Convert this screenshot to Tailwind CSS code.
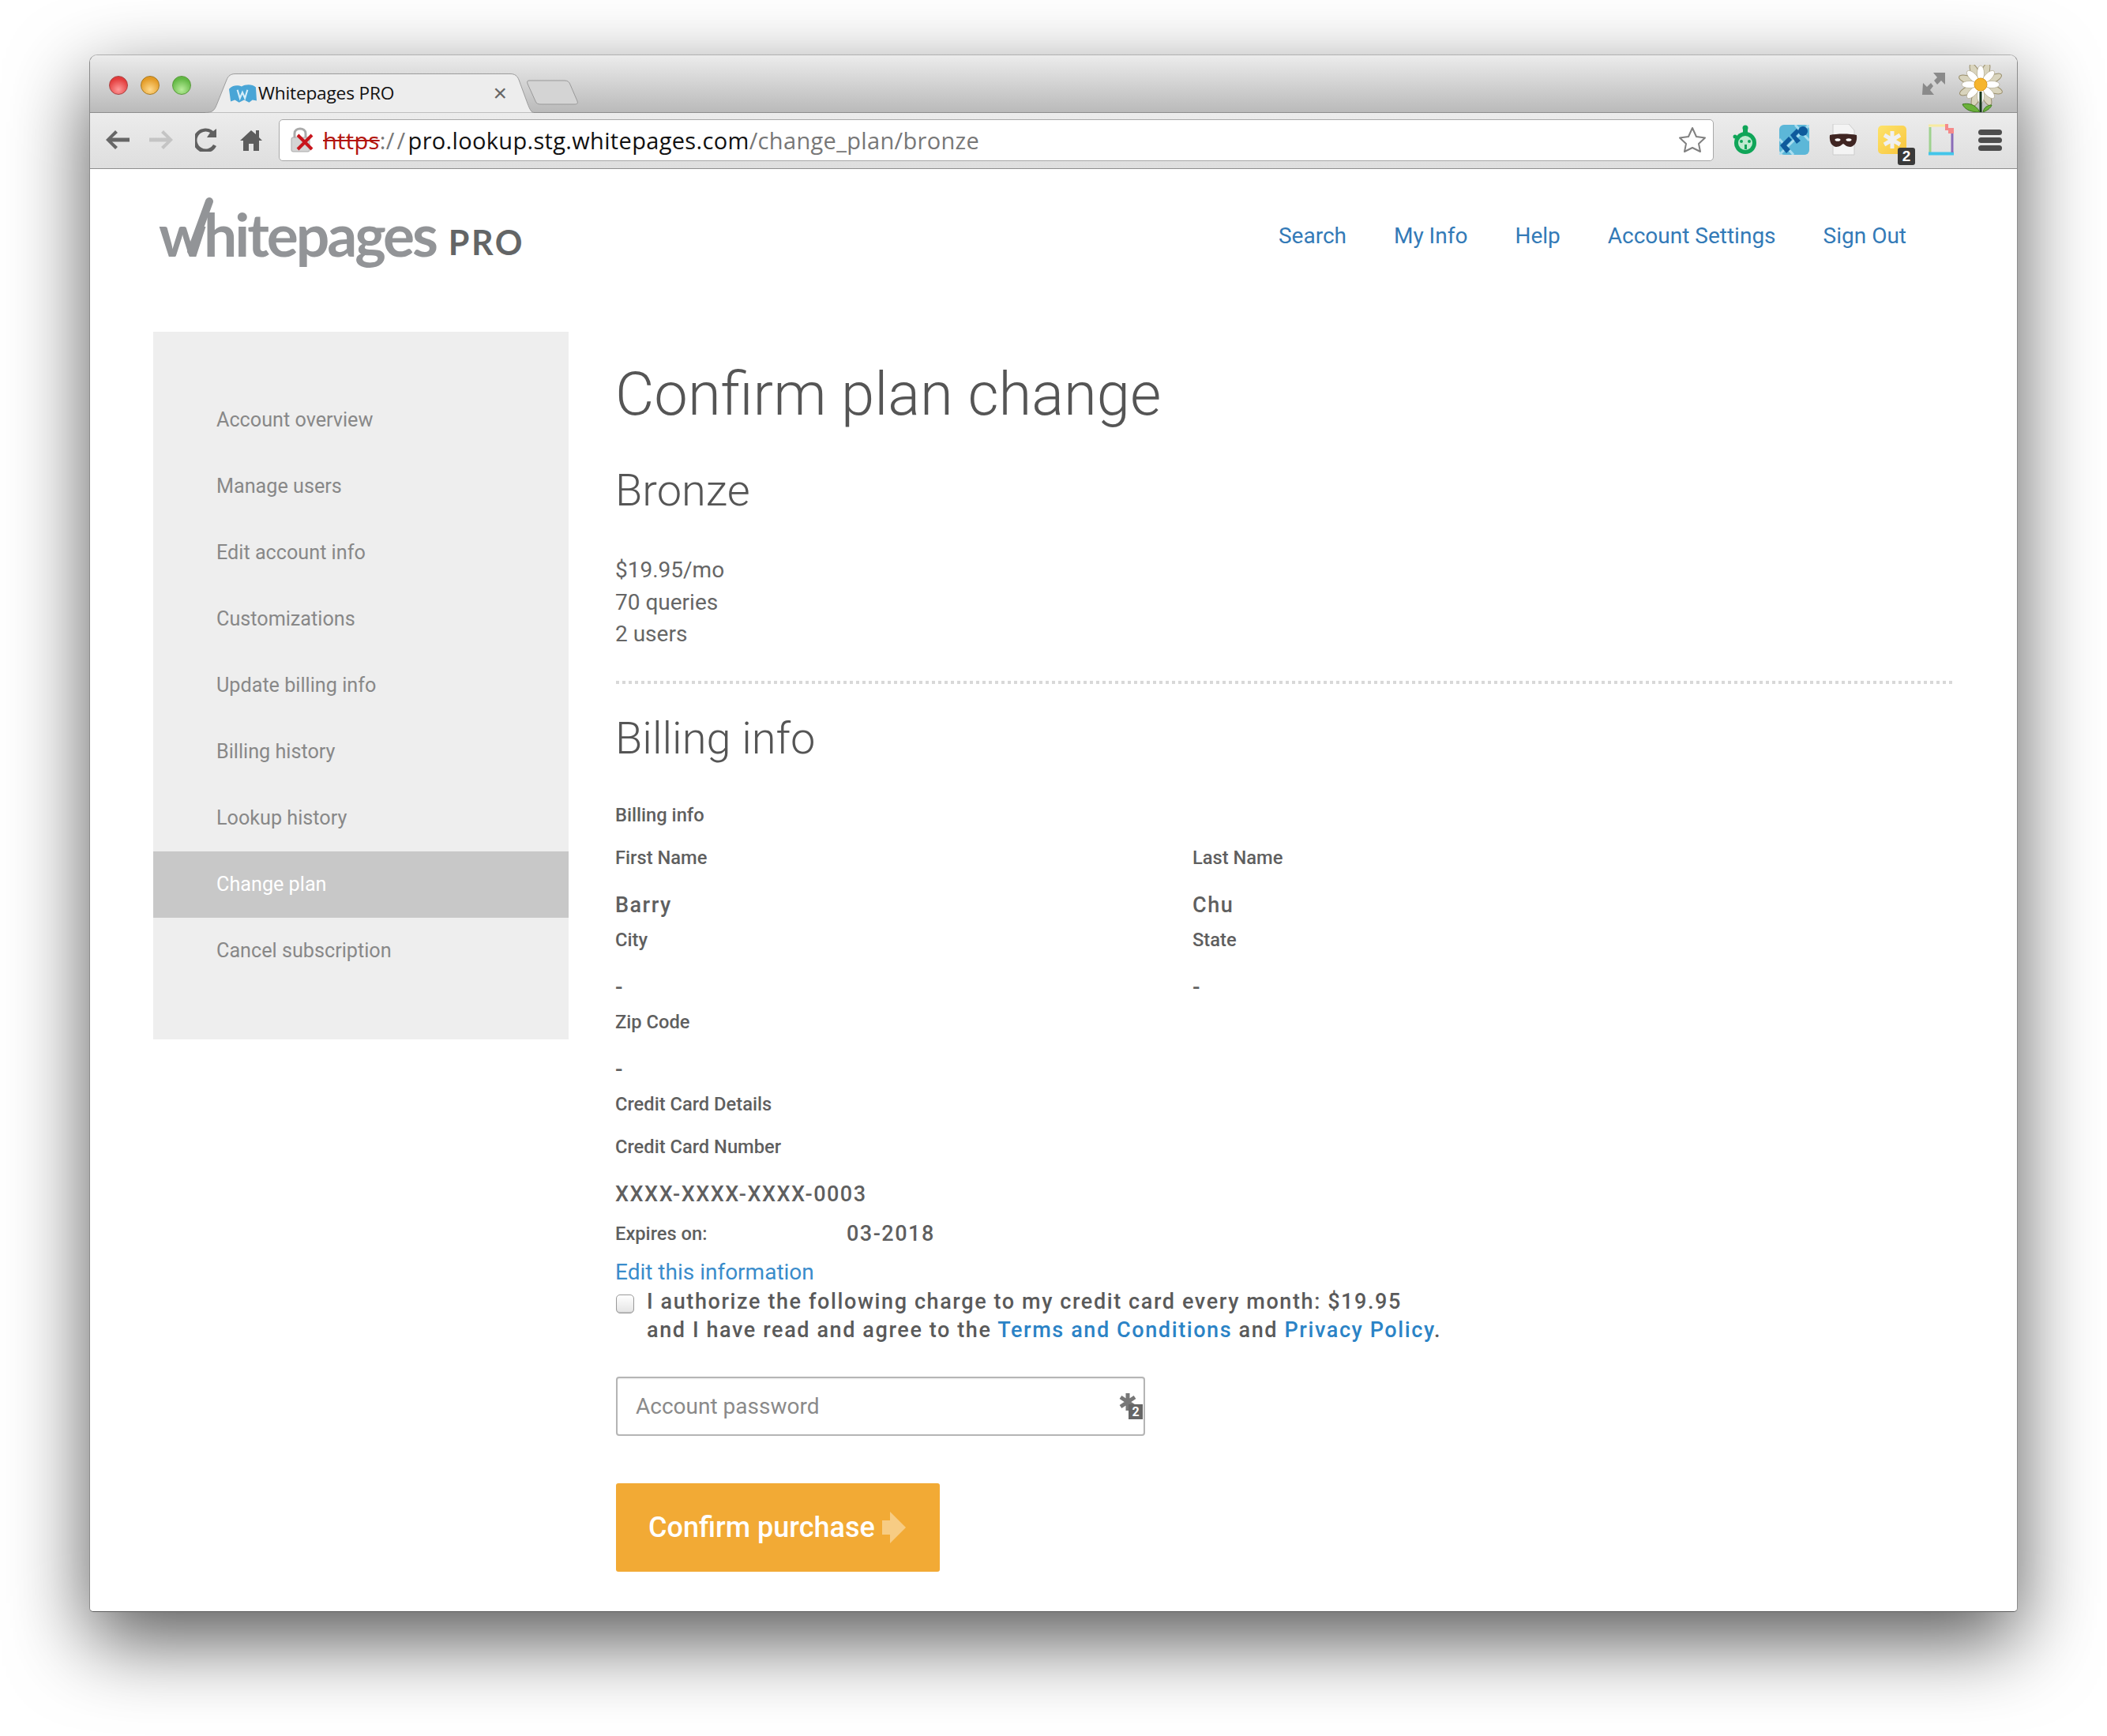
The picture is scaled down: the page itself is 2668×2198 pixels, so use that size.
<!DOCTYPE html>
<html lang="en">
<head>
<meta charset="UTF-8">
<title>Whitepages PRO</title>
<script src="https://cdn.jsdelivr.net/npm/@tailwindcss/browser@4"></script>
</head>
<body class="bg-white w-[2668px] h-[2198px] overflow-hidden font-['Roboto',sans-serif] text-[#666666]">
<div class="ml-[113px] mt-[69px] w-[2442px] h-[1972px] flex flex-col rounded-t-[10px] rounded-b-[5px] bg-white border border-[#8c8c8c] border-t-[#b0b0b0] border-b-[#5c5c5c] shadow-[0_36px_100px_rgba(0,0,0,0.66)] overflow-hidden">

  <!-- title bar -->
  <div class="h-[73px] shrink-0 flex items-end bg-gradient-to-b from-[#ececec] to-[#bababa] border-b border-[#8e8e8e] pl-[24px] pr-[16px]">
    <div class="flex gap-[16px] self-start mt-[26px]">
      <span class="w-[24px] h-[24px] rounded-full border border-[#a44] bg-[radial-gradient(circle_at_50%_75%,#ff9a9a,#e23b3b_70%)]"></span>
      <span class="w-[24px] h-[24px] rounded-full border border-[#a77a22] bg-[radial-gradient(circle_at_50%_75%,#ffd98a,#e39a25_70%)]"></span>
      <span class="w-[24px] h-[24px] rounded-full border border-[#5a9a3c] bg-[radial-gradient(circle_at_50%_75%,#b8ec9a,#62b844_70%)]"></span>
    </div>
    <div class="relative ml-[18px] w-[416px] h-[50px] -mb-px">
      <svg class="absolute inset-0" width="416" height="50" viewBox="0 0 416 50"><path d="M0 49.5C10 49.5 12 46 15 38L27 8C29 3 32 .5 38 .5H386C392 .5 395 3 397 8L408 38C411 46 413 49.5 416 49.5" fill="#ededed" stroke="#9c9c9c"/></svg>
      <div class="relative flex items-center h-full pl-[30px] pr-[34px]">
        <svg width="35" height="24" viewBox="0 0 33 22"><path d="M0 6C4 1 11 1 15 3 20 0 28 0 32 4L33 20 28 19 24 22 18 19 12 22 7 19 2 21Z" fill="#49a5d6"/><path d="M10 7l3 10 3-7 3 7 3-10" fill="none" stroke="#d7eef9" stroke-width="2"/></svg>
        <span class="ml-[2px] font-['Open_Sans',sans-serif] text-[22.7px] leading-none text-[#111] tracking-[-0.2px]">Whitepages PRO</span>
        <span class="ml-auto text-[30px] leading-none font-['Liberation_Sans',sans-serif] text-[#666]">×</span>
      </div>
    </div>
    <svg class="ml-[-9px] mb-[9px] shrink-0" width="66" height="32" viewBox="0 0 66 32"><path d="M3 1H48C52 1 54 3 55 6L64 27C65 30 64 31 60 31H18C14 31 12 30 11 27L1 5C0 2 1 1 3 1Z" fill="#d4d4d4" stroke="#999"/></svg>
    <svg class="ml-auto self-start mt-[20px] shrink-0" width="30" height="32" viewBox="0 0 30 32"><path d="M14 2H29V17L24 12 19 17 15 12 19 8ZM1 15 6 20 11 15 14 19 10 24 15 30H0Z" fill="#8a8a8a"/></svg>
    <svg class="ml-[14px] shrink-0" width="60" height="60" viewBox="-30 -30 60 60">
      <g fill="#d9d4bd" stroke="#9a8f6c" stroke-width="1">
        <ellipse cx="0" cy="-16" rx="5" ry="13" transform="translate(0 -5) rotate(20)"/><ellipse cx="0" cy="-16" rx="5" ry="13" transform="translate(0 -5) rotate(65)"/><ellipse cx="0" cy="-16" rx="5" ry="13" transform="translate(0 -5) rotate(110)"/><ellipse cx="0" cy="-16" rx="5" ry="13" transform="translate(0 -5) rotate(155)"/><ellipse cx="0" cy="-16" rx="5" ry="13" transform="translate(0 -5) rotate(200)"/><ellipse cx="0" cy="-16" rx="5" ry="13" transform="translate(0 -5) rotate(245)"/><ellipse cx="0" cy="-16" rx="5" ry="13" transform="translate(0 -5) rotate(290)"/><ellipse cx="0" cy="-16" rx="5" ry="13" transform="translate(0 -5) rotate(335)"/>
      </g>
      <g fill="#fff" stroke="#a89f80" stroke-width=".6">
        <ellipse cx="0" cy="-14" rx="4.5" ry="10" transform="translate(0 -5)"/><ellipse cx="0" cy="-14" rx="4.5" ry="10" transform="translate(0 -5) rotate(45)"/><ellipse cx="0" cy="-14" rx="4.5" ry="10" transform="translate(0 -5) rotate(90)"/><ellipse cx="0" cy="-14" rx="4.5" ry="10" transform="translate(0 -5) rotate(135)"/><ellipse cx="0" cy="-14" rx="4.5" ry="10" transform="translate(0 -5) rotate(180)"/><ellipse cx="0" cy="-14" rx="4.5" ry="10" transform="translate(0 -5) rotate(225)"/><ellipse cx="0" cy="-14" rx="4.5" ry="10" transform="translate(0 -5) rotate(270)"/><ellipse cx="0" cy="-14" rx="4.5" ry="10" transform="translate(0 -5) rotate(315)"/>
      </g>
      <circle cx="0" cy="-5" r="8" fill="#f6b52c" stroke="#dd9a1a"/>
      <path d="M0 4V30" stroke="#16361a" stroke-width="3"/>
      <path d="M-1 30C-6 20-16 18-23 20-20 27-12 30-1 30ZM3 30C8 28 13 25 14 21 9 21 4 24 3 30Z" fill="#6bb13a" stroke="#3f7a22"/>
    </svg>
  </div>

  <!-- toolbar -->
  <div class="h-[71px] shrink-0 flex items-center pb-[2px] bg-gradient-to-b from-[#ececec] to-[#dedede] border-b border-[#8e8e8e]">
    <div class="w-[239px] shrink-0 h-full flex items-center pl-[19px]">
      <svg width="32" height="26" viewBox="0 0 32 26"><path d="M13 1 1 13 13 25 16 22 9 15.5H31V10.500H9L16 4Z" fill="#666"/></svg>
      <svg class="ml-[23px]" width="32" height="26" viewBox="0 0 32 26"><path d="M19 1 31 13 19 25 16 22 23 15.500H1V10.500H23L16 4Z" fill="#c4c4c4"/></svg>
      <svg class="ml-[27px]" width="28" height="30" viewBox="0 0 28 30"><path d="M23 21A11 11 0 1 1 19 6L15 12H27V1L23 4A15.500 15.500 0 1 0 27 23Z" fill="#606060"/></svg>
      <svg class="ml-[29px]" width="28" height="28" viewBox="0 0 28 28"><path d="M14 2 0 15H4V28H11V19H17V28H24V15H28L24 11V2H20V7Z" fill="#5c5c5c"/></svg>
    </div>
    <div class="w-[1817px] h-[53px] shrink-0 bg-white border border-[#a8a8a8] rounded-[5px] flex items-center pl-[14px] pr-[8px]">
      <svg class="shrink-0" width="30" height="34" viewBox="0 0 30 34"><path d="M5 14V9C5 1 19 1 19 9V14" fill="none" stroke="#aaa" stroke-width="3"/><rect x="1" y="14" width="23" height="18" rx="2" fill="#d4d4d4" stroke="#aaa"/><path d="M9 11 27 29M27 11 9 29" stroke="#c8141c" stroke-width="4"/></svg>
      <span class="ml-[11px] font-['Open_Sans',sans-serif] text-[29px] leading-none tracking-[0.33px] whitespace-nowrap"><span class="text-[#b3140d] line-through">https</span><span class="text-[#777]">:/<span class="ml-[3px]">/</span></span><span class="text-[#111] ml-[3px]">pro.lookup.stg.whitepages.com</span><span class="text-[#777]">/change_plan/bronze</span></span>
      <svg class="ml-auto" width="36" height="34" viewBox="0 0 36 34"><path d="M18 2 23 13 34 14.500 26 22 28 32 18 27 8 32 10 22 2 14.500 13 13Z" fill="#fff" stroke="#808080" stroke-width="2" stroke-linejoin="round"/></svg>
    </div>
    <div class="flex-1 grid grid-cols-[repeat(6,62px)] justify-items-center items-center pl-[9px]">
      <svg width="32" height="38" viewBox="0 0 32 38"><circle cx="16" cy="4" r="3.500" fill="#0fa558"/><path d="M13 6H19V12H13Z" fill="#0fa558"/><circle cx="16" cy="23" r="14" fill="#0fa558"/><circle cx="3" cy="15" r="2.500" fill="#0fa558"/><circle cx="16" cy="23" r="9" fill="#bfe9cf"/><circle cx="11" cy="21" r="2" fill="#0fa558"/><circle cx="21" cy="21" r="2" fill="#0fa558"/><path d="M15 25H18V31H15Z" fill="#0fa558"/></svg>
      <svg width="38" height="38" viewBox="0 0 38 38"><rect width="38" height="38" rx="6" fill="#5cb7d8"/><path d="M0 38 38 0M0 18 18 38M20 0 38 20" stroke="#a8def0" stroke-width="3"/><g fill="#0e5a9c"><path d="M1 26 12 15 16 19 9 26 14 31 9 36Z"/><path d="M14 13 22 5 26 9 21 14 27 20 22 24Z"/><circle cx="30" cy="8" r="6"/></g></svg>
      <svg width="36" height="40" viewBox="0 0 36 40"><path d="M5 0H25L32 8V39H5Z" fill="#f4f4f4" stroke="#ccc"/><path d="M1 14C10 12 26 12 35 14 36 22 33 28 27 29 22 29 20 26 18 25 16 26 14 29 9 29 3 28 0 22 1 14Z" fill="#3f2522"/><ellipse cx="11" cy="20" rx="3.500" ry="1.800" fill="#fff"/><ellipse cx="25" cy="20" rx="3.500" ry="1.800" fill="#fff"/></svg>
      <div class="relative w-[36px] h-[36px] rounded-[5px] bg-gradient-to-br from-[#fde36a] to-[#f8c53a] flex items-center justify-center">
        <svg width="24" height="24" viewBox="0 0 24 24"><path d="M12 1V23M2 6 22 18M22 6 2 18" stroke="#f0f0f0" stroke-width="5"/></svg>
        <span class="absolute right-[-11px] bottom-[-14px] w-[22px] h-[22px] rounded-[3px] bg-[#3a3a3a] text-white text-[19px] font-bold leading-[22px] text-center font-['Liberation_Sans',sans-serif]">2</span>
      </div>
      <svg width="32" height="40" viewBox="0 0 32 40"><path d="M2 4V36" stroke="#9ed28e" stroke-width="3"/><path d="M0 2H22" stroke="#f7eba0" stroke-width="3"/><path d="M0 37.500H32" stroke="#43c5ea" stroke-width="4"/><path d="M30 12V36" stroke="#8a6cb8" stroke-width="3"/><path d="M21 0H25V5H32V12H25V8H21Z" fill="#f58a8a"/></svg>
      <div class="flex flex-col gap-[3px]"><span class="block w-[30px] h-[7px] rounded-full bg-[#4d4d4d]"></span><span class="block w-[30px] h-[7px] rounded-full bg-[#4d4d4d]"></span><span class="block w-[30px] h-[7px] rounded-full bg-[#4d4d4d]"></span></div>
    </div>
  </div>

  <!-- page -->
  <div class="flex-1 flex flex-col">
    <header class="h-[206px] shrink-0 flex items-start justify-between pl-[87px] pr-[140px]">
      <div class="relative flex items-baseline mt-[32px] h-[100px]">
        <span class="font-['Lato',sans-serif] font-bold text-[75px] leading-[100px] tracking-[-3.1px] text-[#929497]">whitepages</span>
        <svg class="absolute left-[34px] top-[4px]" width="40" height="76" viewBox="0 0 40 76"><path d="M30 5 7 68" stroke="#929497" stroke-width="10" stroke-linecap="round"/></svg>
        <span class="ml-[16px] -translate-y-[2px] font-['Lato',sans-serif] font-bold text-[43px] leading-none tracking-[2.6px] text-[#636566]">PRO</span>
      </div>
      <nav class="flex gap-[60px] text-[28px] leading-[36px] text-[#337ab7] mt-[67px]">
        <a>Search</a><a>My Info</a><a>Help</a><a>Account Settings</a><a>Sign Out</a>
      </nav>
    </header>

    <div class="flex pl-[80px]">
      <aside class="w-[526px] h-[896px] shrink-0 bg-[#eeeeee] pt-[70px] text-[25.2px] text-[#888888] leading-[84px]">
        <div class="pl-[80px] h-[84px]">Account overview</div>
        <div class="pl-[80px] h-[84px]">Manage users</div>
        <div class="pl-[80px] h-[84px]">Edit account info</div>
        <div class="pl-[80px] h-[84px]">Customizations</div>
        <div class="pl-[80px] h-[84px]">Update billing info</div>
        <div class="pl-[80px] h-[84px]">Billing history</div>
        <div class="pl-[80px] h-[84px]">Lookup history</div>
        <div class="pl-[80px] h-[84px] bg-[#c8c8c8] text-white">Change plan</div>
        <div class="pl-[80px] h-[84px]">Cancel subscription</div>
      </aside>

      <main class="ml-[59px] w-[1695px]">
        <h1 class="h-[158px] leading-[158px] text-[76px] font-light text-[#555555]">Confirm plan change</h1>
        <h2 class="h-[86px] leading-[86px] text-[56px] font-light text-[#555555]">Bronze</h2>
        <div class="mt-[38px] text-[28px] leading-[40.500px]">
          <p>$19.95/mo</p>
          <p>70 queries</p>
          <p>2 users</p>
        </div>
        <div class="mt-[38px] ml-px h-[4px] bg-[repeating-linear-gradient(90deg,#d8d8d8_0_4px,transparent_4px_8px)]"></div>
        <h2 class="h-[138px] leading-[138px] text-[56px] font-light text-[#555555]">Billing info</h2>

        <div class="mt-[8px] h-[40px] leading-[40px] text-[23.7px] font-medium text-[#5f5f5f]">Billing info</div>
        <div class="mt-[14px] h-[40px] leading-[40px] text-[23.7px] font-medium text-[#5f5f5f] grid grid-cols-[731px_1fr]"><span>First Name</span><span>Last Name</span></div>
        <div class="mt-[20px] h-[40px] leading-[40px] text-[27px] font-medium text-[#5f5f5f] tracking-[1.5px] grid grid-cols-[731px_1fr]"><span>Barry</span><span>Chu</span></div>
        <div class="mt-[4px] h-[40px] leading-[40px] text-[23.7px] font-medium text-[#5f5f5f] grid grid-cols-[731px_1fr]"><span>City</span><span>State</span></div>
        <div class="mt-[20px] h-[40px] leading-[40px] text-[28px] font-medium text-[#5f5f5f] grid grid-cols-[731px_1fr]"><span>-</span><span>-</span></div>
        <div class="mt-[4px] h-[40px] leading-[40px] text-[23.7px] font-medium text-[#5f5f5f]">Zip Code</div>
        <div class="mt-[20px] h-[40px] leading-[40px] text-[28px] font-medium text-[#5f5f5f]">-</div>
        <div class="mt-[4px] h-[40px] leading-[40px] text-[23.7px] font-medium text-[#5f5f5f]">Credit Card Details</div>
        <div class="mt-[14px] h-[40px] leading-[40px] text-[23.7px] font-medium text-[#5f5f5f]">Credit Card Number</div>
        <div class="mt-[20px] h-[40px] leading-[40px] text-[27px] font-medium text-[#5f5f5f] tracking-[1.5px]">XXXX-XXXX-XXXX-0003</div>
        <div class="mt-[10px] h-[40px] leading-[40px] flex items-center font-medium text-[#5f5f5f]">
          <span class="w-[293px] text-[23.7px]">Expires on:</span><span class="text-[27px] tracking-[1.5px]">03-2018</span>
        </div>
        <a class="mt-[9px] block h-[40px] leading-[40px] text-[28px] text-[#3a8ccb]">Edit this information</a>

        <div class="flex -mt-px">
          <span class="mt-[9px] ml-[1px] w-[23px] h-[24px] shrink-0 rounded-[5px] border border-[#9a9a9a] bg-gradient-to-b from-[#ffffff] to-[#e4e4e4] shadow-[inset_0_-1px_1px_rgba(0,0,0,0.15)]"></span>
          <p class="ml-[16px] text-[27px] font-medium text-[#5a5a5a] leading-[36px] tracking-[1.6px]">I authorize the following charge to my credit card every month: $19.95<br>and I have read and agree to the <a class="text-[#2b83c6]">Terms and Conditions</a> and <a class="text-[#2b83c6]">Privacy Policy</a>.</p>
        </div>

        <div class="mt-[41px] ml-px w-[670px] h-[75px] rounded-[4px] border-2 border-[#b5b5b5] flex items-center pl-[23px] pr-[1px] shadow-[inset_0_1px_2px_rgba(0,0,0,0.08)]">
          <span class="mt-[2px] text-[28px] text-[#8a8a8a]">Account password</span>
          <span class="relative ml-auto w-[30px] h-[34px]">
            <svg class="absolute left-0 top-0" width="22" height="24" viewBox="0 0 22 24"><path d="M11 1V23M2 6 20 18M20 6 2 18" stroke="#777" stroke-width="5"/></svg>
            <span class="absolute right-0 bottom-0 w-[18px] h-[19px] bg-[#666] text-white text-[16px] font-bold leading-[19px] text-center">2</span>
          </span>
        </div>

        <button class="mt-[60px] ml-px w-[410px] h-[112px] rounded-[3px] bg-[#f2aa35] flex items-center pl-[41px] text-white text-[36px] font-medium">
          <span>Confirm purchase</span>
          <svg class="ml-[9px]" width="30" height="40" viewBox="0 0 30 40"><path d="M0 11H10V0L30 20 10 40V29H0Z" fill="#f7cc84"/></svg>
        </button>
      </main>
    </div>
  </div>
</div>
</body>
</html>
